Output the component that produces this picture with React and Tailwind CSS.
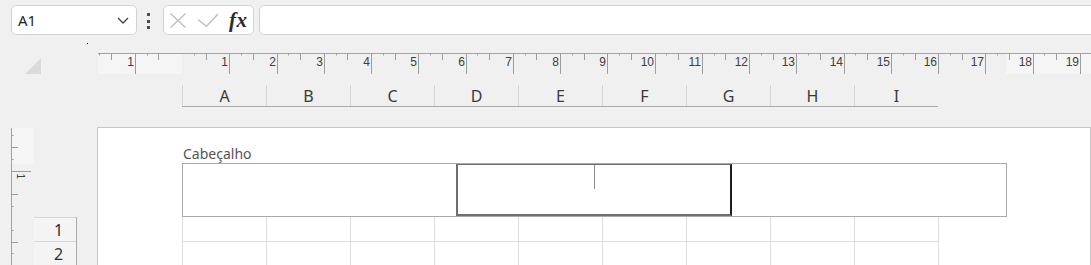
import React from "react";

const CM = 47.26;
const ORIGIN = 182;

function HRuler() {
  const items = [];
  for (let q = -8; q <= 80; q++) {
    if (q === 0) continue;
    const pos = ORIGIN + (q / 4) * CM;
    if (pos < 98 || pos > 1091) continue;
    const mod = ((q % 4) + 4) % 4;
    const x = Math.round(pos) + 0.5;
    if (mod === 0) {
      items.push(<line key={"l" + q} x1={x} y1={0} x2={x} y2={21} stroke="#9d9d9d" strokeWidth="1" />);
      items.push(
        <text key={"t" + q} x={x - 1.5} y={12.5} textAnchor="end" fontSize="12" fill="#3d3d3d" fontFamily="'Liberation Sans', sans-serif">
          {Math.abs(q / 4)}
        </text>
      );
    } else if (mod === 2) {
      items.push(<line key={"h" + q} x1={x} y1={0} x2={x} y2={7} stroke="#9d9d9d" strokeWidth="1" />);
    } else if (mod === 1) {
      items.push(<line key={"q" + q} x1={x} y1={0} x2={x} y2={2.5} stroke="#9d9d9d" strokeWidth="1" />);
    }
  }
  return (
    <svg width="993" height="22" viewBox="98 0 993 22" className="block shrink-0">
      <rect x="98" y="1" width="84" height="20" fill="#f5f5f5" />
      <rect x="1006" y="1" width="85" height="20" fill="#f5f5f5" />
      <line x1="98" y1="0.5" x2="1091" y2="0.5" stroke="#a3a3a3" strokeWidth="1" />
      {items}
    </svg>
  );
}

function VRuler() {
  const medium = [147.5, 194.5, 242.5];
  const short = [135.5, 159.5, 206.5, 230.5, 253.5];
  return (
    <svg width="24" height="138" viewBox="10 127 24 138" className="block shrink-0 ml-[10px]">
      <rect x="12" y="128" width="22" height="36" fill="#f5f5f5" />
      <line x1="11.5" y1="128" x2="11.5" y2="265" stroke="#a3a3a3" strokeWidth="1" />
      <line x1="11" y1="171.5" x2="31" y2="171.5" stroke="#9d9d9d" strokeWidth="1" />
      {medium.map((y) => (
        <line key={"m" + y} x1="11" y1={y} x2="18" y2={y} stroke="#9d9d9d" strokeWidth="1" />
      ))}
      {short.map((y) => (
        <line key={"s" + y} x1="11" y1={y} x2="13.5" y2={y} stroke="#9d9d9d" strokeWidth="1" />
      ))}
      <text x="14" y="176" fontSize="10" fill="#3d3d3d" fontFamily="'Liberation Sans', sans-serif" transform="rotate(90 16.5 176)">
        1
      </text>
    </svg>
  );
}

const COLS = ["A", "B", "C", "D", "E", "F", "G", "H", "I"];

export default function App() {
  return (
    <div
      className="w-[1091px] h-[265px] overflow-hidden bg-[#f0f0f0] flex flex-col"
      style={{ fontFamily: "'Noto Sans', 'Open Sans', sans-serif" }}
    >
      {/* Toolbar */}
      <div className="h-[40px] shrink-0 flex items-start pt-[5px]">
        <div className="ml-[11px] w-[126px] h-[30px] shrink-0 rounded-[5px] border border-[#d3d3d3] bg-white flex items-center justify-between pl-[6px] pr-[7px]">
          <span className="text-[15px] leading-none text-[#1f1f1f]">A1</span>
          <svg width="12" height="7" viewBox="0 0 12 7" className="block">
            <path d="M1 1 L6 6 L11 1" fill="none" stroke="#454545" strokeWidth="1.3" />
          </svg>
        </div>
        <div className="ml-[10px] w-[3px] shrink-0 flex flex-col gap-[3.5px] pt-[8px]">
          <div className="w-[3px] h-[3px] bg-[#4d4d4d]" />
          <div className="w-[3px] h-[3px] bg-[#4d4d4d]" />
          <div className="w-[3px] h-[3px] bg-[#4d4d4d]" />
        </div>
        <div className="ml-[13px] w-[91px] h-[30px] shrink-0 rounded-[5px] border border-[#d3d3d3] bg-white flex items-center pl-[6px]">
          <svg width="16" height="15" viewBox="0 0 16 15" className="block">
            <path d="M0.5 0.5 L15.5 14.5 M15.5 0.5 L0.5 14.5" fill="none" stroke="#bdbdbd" strokeWidth="1.3" />
          </svg>
          <svg width="22" height="16" viewBox="0 0 22 16" className="block ml-[11px]">
            <path d="M1 7.5 L9.5 14.3 L21 2" fill="none" stroke="#bdbdbd" strokeWidth="1.3" />
          </svg>
          <span
            className="ml-[10px] text-[21px] leading-none italic font-semibold text-[#2b2b2b] tracking-[0.5px]"
            style={{ fontFamily: "'Liberation Serif', serif" }}
          >
            fx
          </span>
        </div>
        <div className="ml-[5px] w-[860px] h-[30px] shrink-0 rounded-[5px] border border-[#d3d3d3] bg-white" />
      </div>

      {/* Ruler + column headers */}
      <div className="h-[87px] shrink-0 flex">
        <div className="w-[98px] shrink-0">
          <svg width="98" height="87" viewBox="0 40 98 87" className="block">
            <polygon points="41,58 41,74 25,74" fill="#dadada" />
            <rect x="87" y="43" width="1" height="1" fill="#000" />
          </svg>
        </div>
        <div className="flex-1 flex flex-col pt-[13px]">
          <HRuler />
          <div className="ml-[84px] mt-[10px] flex h-[22px] w-[756px] border-b border-[#ababab]">
            {COLS.map((c) => (
              <div
                key={c}
                className="w-[84px] h-full shrink-0 border-l border-[#d6d6d6] flex items-center justify-center text-[16px] text-[#3a3a3a]"
              >
                {c}
              </div>
            ))}
          </div>
        </div>
      </div>

      {/* Page area */}
      <div className="flex-1 min-h-0 flex">
        <div className="w-[97px] shrink-0 flex items-start">
          <VRuler />
          <div className="w-[43px] shrink-0 mt-[90px] border-r border-[#ababab] bg-[#f4f4f4]">
            {["1", "2"].map((r) => (
              <div
                key={r}
                className="h-[24px] border-t border-[#d6d6d6] flex items-center justify-center pl-[7px] text-[16px] text-[#2f2f2f]"
              >
                {r}
              </div>
            ))}
          </div>
        </div>
        <div className="flex-1 bg-white border-l border-t border-r border-[#c8c8c8] pl-[84px] pt-[16px]">
          <div className="h-[19px] leading-[19px] text-[14px] text-[#555555] pl-[1px]">Cabeçalho</div>
          <div className="w-[825px] h-[54px] border border-[#a9a9a9] flex">
            <div className="w-[273px] shrink-0" />
            <div className="w-[276px] shrink-0 border-l-2 border-t border-b-2 border-r-2 border-[#6f6f6f] border-r-[#1e1e1e] flex justify-center items-start">
              <div className="w-px h-[24px] bg-[#8c8c8c]" />
            </div>
            <div className="flex-1" />
          </div>
          <div className="w-[757px] border-r border-[#dedede]">
            {[0, 1].map((r) => (
              <div key={r} className="flex h-[25px] border-b border-[#dedede]">
                {COLS.map((c) => (
                  <div key={c} className="w-[84px] h-full shrink-0 border-l border-[#dedede]" />
                ))}
              </div>
            ))}
          </div>
        </div>
      </div>
    </div>
  );
}
